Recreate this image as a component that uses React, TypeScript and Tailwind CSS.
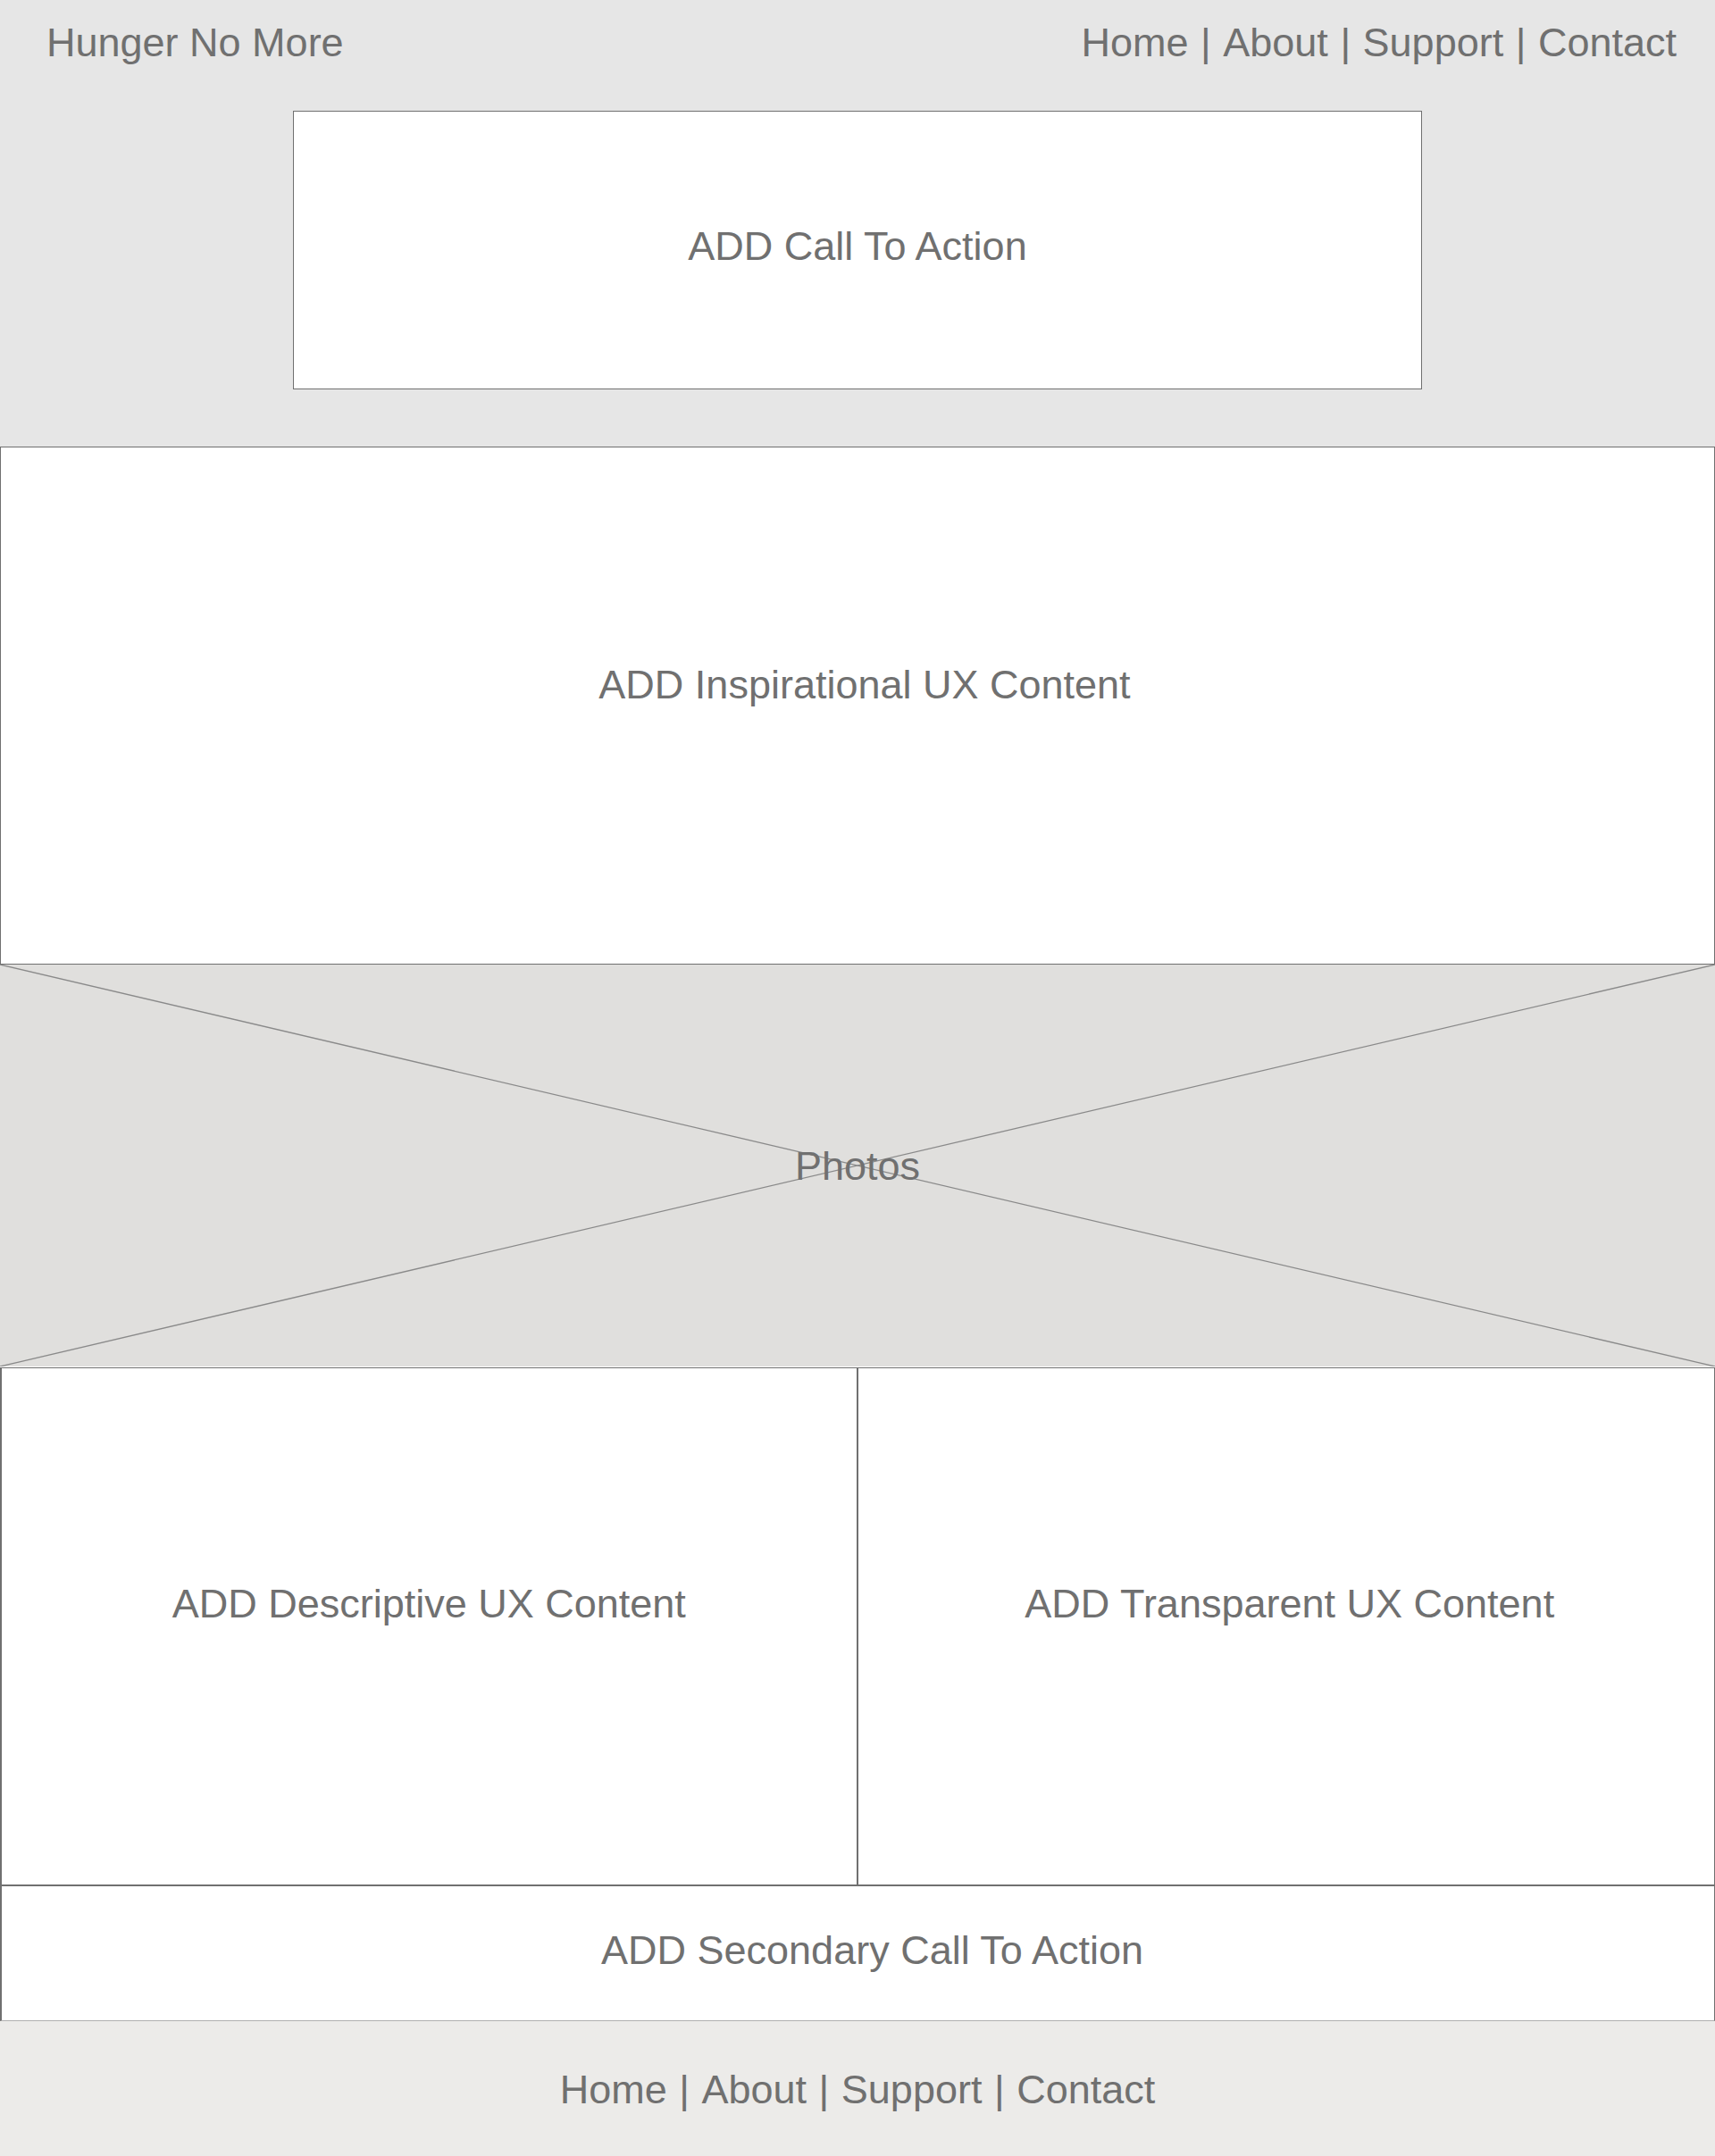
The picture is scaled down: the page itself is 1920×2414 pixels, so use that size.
import React from "react";

const font = { fontFamily: '"Liberation Sans", Arial, Helvetica, sans-serif' };

function Nav() {
  return (
    <nav className="flex items-center whitespace-pre text-[45px] leading-none text-[#707070]">
      <span>Home</span>
      <span className="px-[1px]"> | </span>
      <span>About</span>
      <span className="px-[1px]"> | </span>
      <span>Support</span>
      <span className="px-[1px]"> | </span>
      <span>Contact</span>
    </nav>
  );
}

export default function App() {
  return (
    <div style={font} className="w-[1920px] bg-white text-[#707070]">
      {/* Header */}
      <header className="flex h-[500px] flex-col bg-[#e6e6e6]">
        <div className="flex items-start justify-between pl-[52px] pr-[43px] pt-[25px]">
          <div className="text-[45px] leading-none">Hunger No More</div>
          <Nav />
        </div>
        <div className="mx-auto mt-[54px] flex h-[312px] w-[1264px] items-center justify-center border border-[#707070] bg-white pb-[10px]">
          <span className="text-[45px] leading-none">ADD Call To Action</span>
        </div>
      </header>

      {/* Inspirational */}
      <section className="flex h-[580px] items-center justify-center border border-[#707070] bg-white pb-[48px] pl-[16px]">
        <span className="text-[45px] leading-none">ADD Inspirational UX Content</span>
      </section>

      {/* Photos */}
      <section className="relative flex h-[450px] items-center justify-center bg-[#e0dfdd]">
        <svg
          className="absolute inset-0 h-full w-full"
          viewBox="0 0 1920 450"
          preserveAspectRatio="none"
        >
          <line x1="0" y1="0" x2="1920" y2="450" stroke="#8a8a8a" strokeWidth="1.3" vectorEffect="non-scaling-stroke" />
          <line x1="0" y1="450" x2="1920" y2="0" stroke="#8a8a8a" strokeWidth="1.3" vectorEffect="non-scaling-stroke" />
        </svg>
        <span className="relative text-[45px] leading-none">Photos</span>
      </section>

      <div className="h-px bg-white" />

      {/* Two columns */}
      <section className="grid h-[581px] grid-cols-2 border-t border-b-2 border-l-2 border-r border-[#707070] bg-white">
        <div className="flex items-center justify-center border-r-2 border-[#707070] pb-[52px]">
          <span className="text-[45px] leading-none">ADD Descriptive UX Content</span>
        </div>
        <div className="flex items-center justify-center pb-[52px] pl-[8px]">
          <span className="text-[45px] leading-none">ADD Transparent UX Content</span>
        </div>
      </section>

      {/* Secondary CTA */}
      <section className="flex h-[151px] items-center justify-center border-b border-l-2 border-r border-l-[#707070] border-r-[#707070] border-b-[#b0b0b0] bg-white pb-[8px] pl-[32px]">
        <span className="text-[45px] leading-none">ADD Secondary Call To Action</span>
      </section>

      {/* Footer */}
      <footer className="flex h-[151px] items-center justify-center bg-[#ecebe9] pt-[2px]">
        <Nav />
      </footer>
    </div>
  );
}
